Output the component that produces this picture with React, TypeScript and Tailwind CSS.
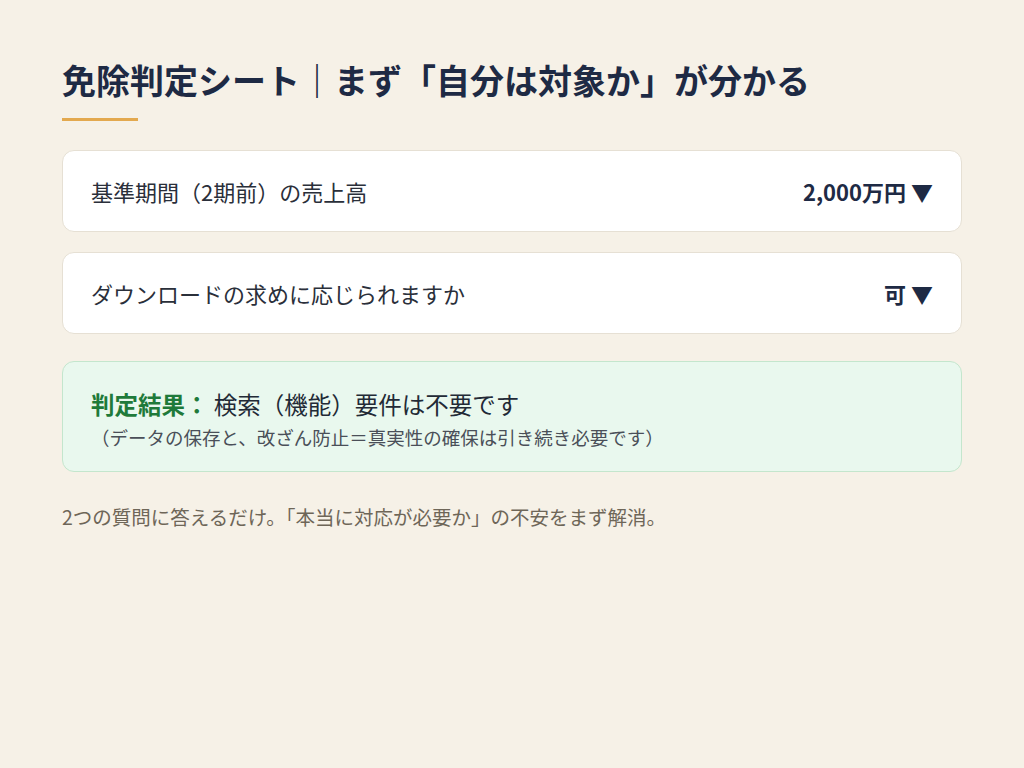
import React from "react";

const jp = '"Noto Sans CJK JP", "Noto Sans", sans-serif';

function SelectRow({ label, value }: { label: string; value: string }) {
  return (
    <div className="flex items-center justify-between rounded-xl border border-[#e6e0d4] bg-white px-7 h-[82px]">
      <span className="text-[22px] text-[#2a2f3a]">{label}</span>
      <span className="text-[22px] font-bold text-[#1e2a44]">
        {value} ▼
      </span>
    </div>
  );
}

export default function App() {
  return (
    <div className="min-h-[768px] bg-[#f6f1e7]" style={{ fontFamily: jp }}>
      <div className="mx-auto w-[900px] pt-[57px]">
        <h1 className="text-[34px] font-bold leading-[46px] text-[#1e2a44]">
          免除判定シート｜まず「自分は対象か」が分かる
        </h1>
        <div className="mt-[15px] h-[3px] w-[76px] bg-[#e3a94f]" />

        <div className="mt-[29px] flex flex-col gap-[20px]">
          <SelectRow label="基準期間（2期前）の売上高" value="2,000万円" />
          <SelectRow label="ダウンロードの求めに応じられますか" value="可" />
        </div>

        <div className="mt-[27px] h-[111px] rounded-xl border border-[#c4e6cd] bg-[#e9f8ee] px-7 pt-[25px]">
          <div className="text-[23.5px] leading-[34px] text-[#222a36]">
            <span className="font-bold text-[#1f7a3a]">判定結果：</span>{" "}
            検索（機能）要件は不要です
          </div>
          <div className="mt-[2px] text-[18.5px] leading-[28px] text-[#4a4f58]">
            （データの保存と、改ざん防止＝真実性の確保は引き続き必要です）
          </div>
        </div>

        <p className="mt-[30px] text-[19.5px] leading-[29px] text-[#6e6658]">
          2つの質問に答えるだけ。「本当に対応が必要か」の不安をまず解消。
        </p>
      </div>
    </div>
  );
}
